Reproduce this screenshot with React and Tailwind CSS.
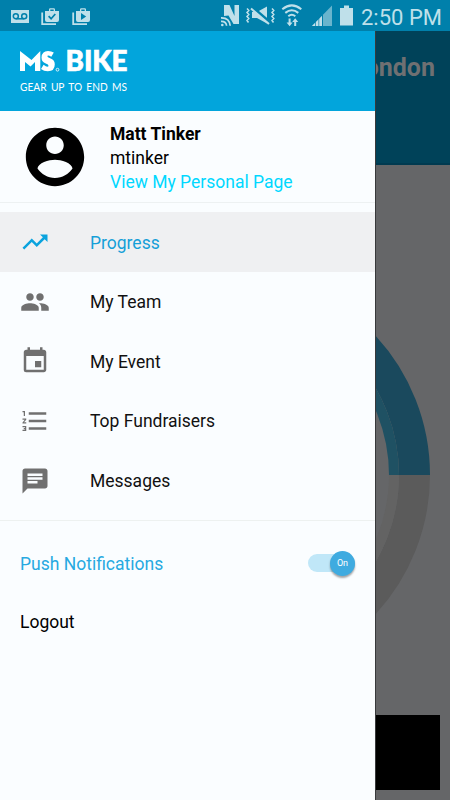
import React from 'react';
import { MdTrendingUp, MdPeople, MdEvent, MdFormatListNumbered, MdChat } from 'react-icons/md';

const menuItems = [
  { label: 'Progress', Icon: MdTrendingUp, active: true },
  { label: 'My Team', Icon: MdPeople },
  { label: 'My Event', Icon: MdEvent },
  { label: 'Top Fundraisers', Icon: MdFormatListNumbered },
  { label: 'Messages', Icon: MdChat },
];

const StoreIcon = ({ children }) => (
  <svg width="19" height="18" viewBox="0 0 19 18" fill="none">
    <path d="M1.2 4.5V16.2H15" stroke="#bfe0ea" strokeWidth="1.8" />
    <path d="M4 3h4V1.6Q8 .3 9.3.3h3.4Q14 .3 14 1.6V3h4v9q0 2-2 2H6q-2 0-2-2zM9.3 3h3.4V1.6H9.3z" fill="#bfe0ea" fillRule="evenodd" />
    {children}
  </svg>
);

const StatusBar = () => (
  <header className="flex h-[31px] shrink-0 items-center justify-between bg-[#0080ab] pr-[8px] pl-[11px] text-[#bfe0ea]">
    <div className="flex items-center gap-[12px] pt-[2px]">
      <svg width="18" height="13" viewBox="0 0 18 13">
        <path d="M0 0h18v13H0z" fill="#bfe0ea" />
        <g fill="none" stroke="#0080ab" strokeWidth="1.5">
          <circle cx="4.8" cy="6.2" r="2.5" />
          <circle cx="13.2" cy="6.2" r="2.5" />
          <path d="M4.8 8.8h8.4" />
        </g>
      </svg>
      <StoreIcon>
        <path d="M7.6 8.2l2.5 2.5 4.2-4.7" stroke="#0080ab" strokeWidth="1.7" />
      </StoreIcon>
      <StoreIcon>
        <path d="M9 5l5.2 3.5L9 12z" fill="#0080ab" />
      </StoreIcon>
    </div>
    <div className="flex items-center">
      <svg width="137" height="31" viewBox="220 0 137 31" fill="#bfe0ea">
        {/* NFC */}
        <path d="M224 16V5h5.500l5 11V5h4.500v19h-5.500l-5-8.500z" />
        <g fill="none" stroke="#bfe0ea" strokeWidth="1.700">
          <path d="M221 17.800q8.500-.3 9.200 8M221 21.300q5.200-.2 5.600 4.500" />
        </g>
        <circle cx="222.300" cy="25" r="1.300" />
        {/* vibrate */}
        <path d="M252 12h5l10-5.500v17l-10-5.500h-5z" />
        <path d="M251.500 6.500l18.500 16" stroke="#0080ab" strokeWidth="3" />
        <g fill="none" stroke="#bfe0ea" strokeWidth="1.500">
          <path d="M251 8.500l18 15.500" strokeWidth="2" />
          <path d="M247 8.500l1.800 2-1.800 2 1.800 2-1.800 2 1.800 2-1.800 2 1.500 2M272 8.500l1.800 2-1.800 2 1.800 2-1.800 2 1.800 2-1.800 2 1.500 2" />
        </g>
        {/* wifi */}
        <g fill="none" stroke="#bfe0ea" strokeWidth="2">
          <path d="M282.300 9.300q9.500-7.800 19 0M285.300 12.900q6.500-5.300 13 0M288.300 16.300q3.500-3 7 0" />
        </g>
        <path d="M288.600 18.500v4h-2l3 3.800 3-3.800h-2v-4zM294.200 26v-4h-2l3-3.800 3 3.800h-2v4z" />
        {/* signal */}
        <path d="M312 26l20-20.500V26z" opacity=".55" />
        <path d="M312 26l10.500-10.500V26z" />
        <path d="M315.500 20v6M318.800 17v9" stroke="#0080ab" strokeWidth=".7" />
        <path d="M322.500 15v11" stroke="#0080ab" strokeWidth="1" />
        {/* battery */}
        <path d="M340 8h4V5.500h5V8h4v17.500h-13z" />
      </svg>
      <span className="ml-[4px] w-[81px] pt-[4px] text-[22px] leading-[28px] whitespace-nowrap">2:50 PM</span>
    </div>
  </header>
);

const Logo = () => (
  <div className="flex h-[80px] flex-col bg-[#02a5dc] pt-[19px] pl-[20px] text-white">
    <svg width="109" height="24" viewBox="0 0 109 24" fill="#fff" overflow="visible">
      <path d="M0 1l11.500 9L20.300 1V21h-5.300v-9l-4.500 4.500L5 12v9H0V7z" />
      <path d="M33.800 2.500l-2.500 4.300q-3.500-2.300-4-.8 0 1.300 2.800 2.200 4.700 1.500 4.700 6 0 7-7 7-4 0-6.800-2.200l2.600-4.300q4 3.300 5 1.200 0-1.500-2.800-2.400-4.300-1.500-4.300-6Q21.800 1 28 1q3.500 0 5.800 1.500z" />
      <circle cx="37.500" cy="19.700" r="1.400" fill="none" stroke="#fff" strokeWidth=".8" />
      <text x="45.500" y="21" fontFamily="Lato" fontWeight="900" fontSize="27.500" stroke="#fff" strokeWidth=".7" textLength="62" lengthAdjust="spacingAndGlyphs">BIKE</text>
    </svg>
    <svg className="mt-[5px]" width="109" height="18" viewBox="0 0 109 18" fill="#fff">
      <text x="0" y="12.200" fontFamily="Lato" fontSize="10.800" wordSpacing="1.800" textLength="107" lengthAdjust="spacingAndGlyphs">GEAR UP TO END MS</text>
    </svg>
  </div>
);

const Profile = () => (
  <section className="flex h-[92px] items-center border-b border-[#edf1f2] pl-[20px]">
    <svg className="size-[70px] shrink-0" viewBox="0 0 24 24" fill="#000">
      <path d="M12 2C6.480 2 2 6.480 2 12s4.480 10 10 10 10-4.480 10-10S17.520 2 12 2zm0 3c1.660 0 3 1.340 3 3s-1.340 3-3 3-3-1.340-3-3 1.340-3 3-3zm0 14.200c-2.500 0-4.710-1.280-6-3.220.03-1.990 4-3.080 6-3.080 1.990 0 5.970 1.090 6 3.080-1.290 1.940-3.500 3.220-6 3.220z" />
    </svg>
    <div className="ml-[20px] pt-[2px] text-[17.500px] leading-[24px] text-black">
      <p className="font-bold">Matt Tinker</p>
      <p>mtinker</p>
      <a href="#" className="block text-[#00d8ff]">View My Personal Page</a>
    </div>
  </section>
);

const Drawer = () => (
  <aside className="flex w-[375px] shrink-0 flex-col bg-[#fafdff] text-[17.500px] text-[#111]">
    <Logo />
    <Profile />
    <nav className="border-b border-[#edf1f0] pt-[9px] pb-[10px]">
      {menuItems.map(({ label, Icon, active }) => (
        <a
          key={label}
          href="#"
          className={`flex h-[59.600px] items-center pt-[1px] pl-[20px] ${active ? 'bg-[#eff0f2] text-[#159fd8]' : ''}`}
        >
          <Icon className={`size-[30px] ${active ? 'text-[#0aa3de]' : 'text-[#707070]'}`} />
          <span className="ml-[40px] pt-[1px]">{label}</span>
        </a>
      ))}
    </nav>
    <div className="mt-[13px] flex h-[59px] items-center justify-between pr-[20px] pl-[20px]">
      <span className="pt-[1px] text-[#27a9e1]">Push Notifications</span>
      <button className="flex h-[18px] w-[47px] items-center justify-end rounded-full bg-[#c0e7f8]">
        <span className="flex size-[25px] shrink-0 items-center justify-center rounded-full bg-[#3fabe0] text-[9px] text-white shadow-[0_2px_2px_rgba(0,0,0,0.35)]">
          On
        </span>
      </button>
    </div>
    <a href="#" className="flex h-[58px] items-center pl-[20px] text-black">Logout</a>
  </aside>
);

// Dimmed progress screen behind the open drawer
const ProgressScreen = () => (
  <main className="flex min-w-0 flex-1 flex-col overflow-hidden border-l border-[#38393b] bg-[#656668]">
    <div className="flex h-[134px] shrink-0 justify-end border-b-2 border-[#003a50] bg-[#004259] pt-[21px] pr-[15px]">
      <h1 className="text-[25px] leading-[32px] font-bold text-[#6f7072]">London</h1>
    </div>
    <svg className="mt-[135px] shrink-0" width="74" height="350" viewBox="376 300 74 350" fill="none">
      <path d="M414.500 475A189.500 189.500 0 0 1 225 664.500" stroke="#5b5b5b" strokeWidth="31" />
      <path d="M394 475A169 169 0 0 1 225 644" stroke="#636363" strokeWidth="10" />
      <path d="M225 285.500A189.500 189.500 0 0 1 414.500 475" stroke="#1a495d" strokeWidth="31" />
      <path d="M225 306A169 169 0 0 1 394 475" stroke="#1f5163" strokeWidth="10" />
    </svg>
    <div className="mt-[65px] mr-[10px] h-[75px] shrink-0 bg-black" />
  </main>
);

const App = () => (
  <div className="flex h-[800px] w-[450px] flex-col overflow-hidden bg-[#656668] font-[Roboto,sans-serif]">
    <StatusBar />
    <div className="flex min-h-0 flex-1">
      <Drawer />
      <ProgressScreen />
    </div>
  </div>
);

export default App;
